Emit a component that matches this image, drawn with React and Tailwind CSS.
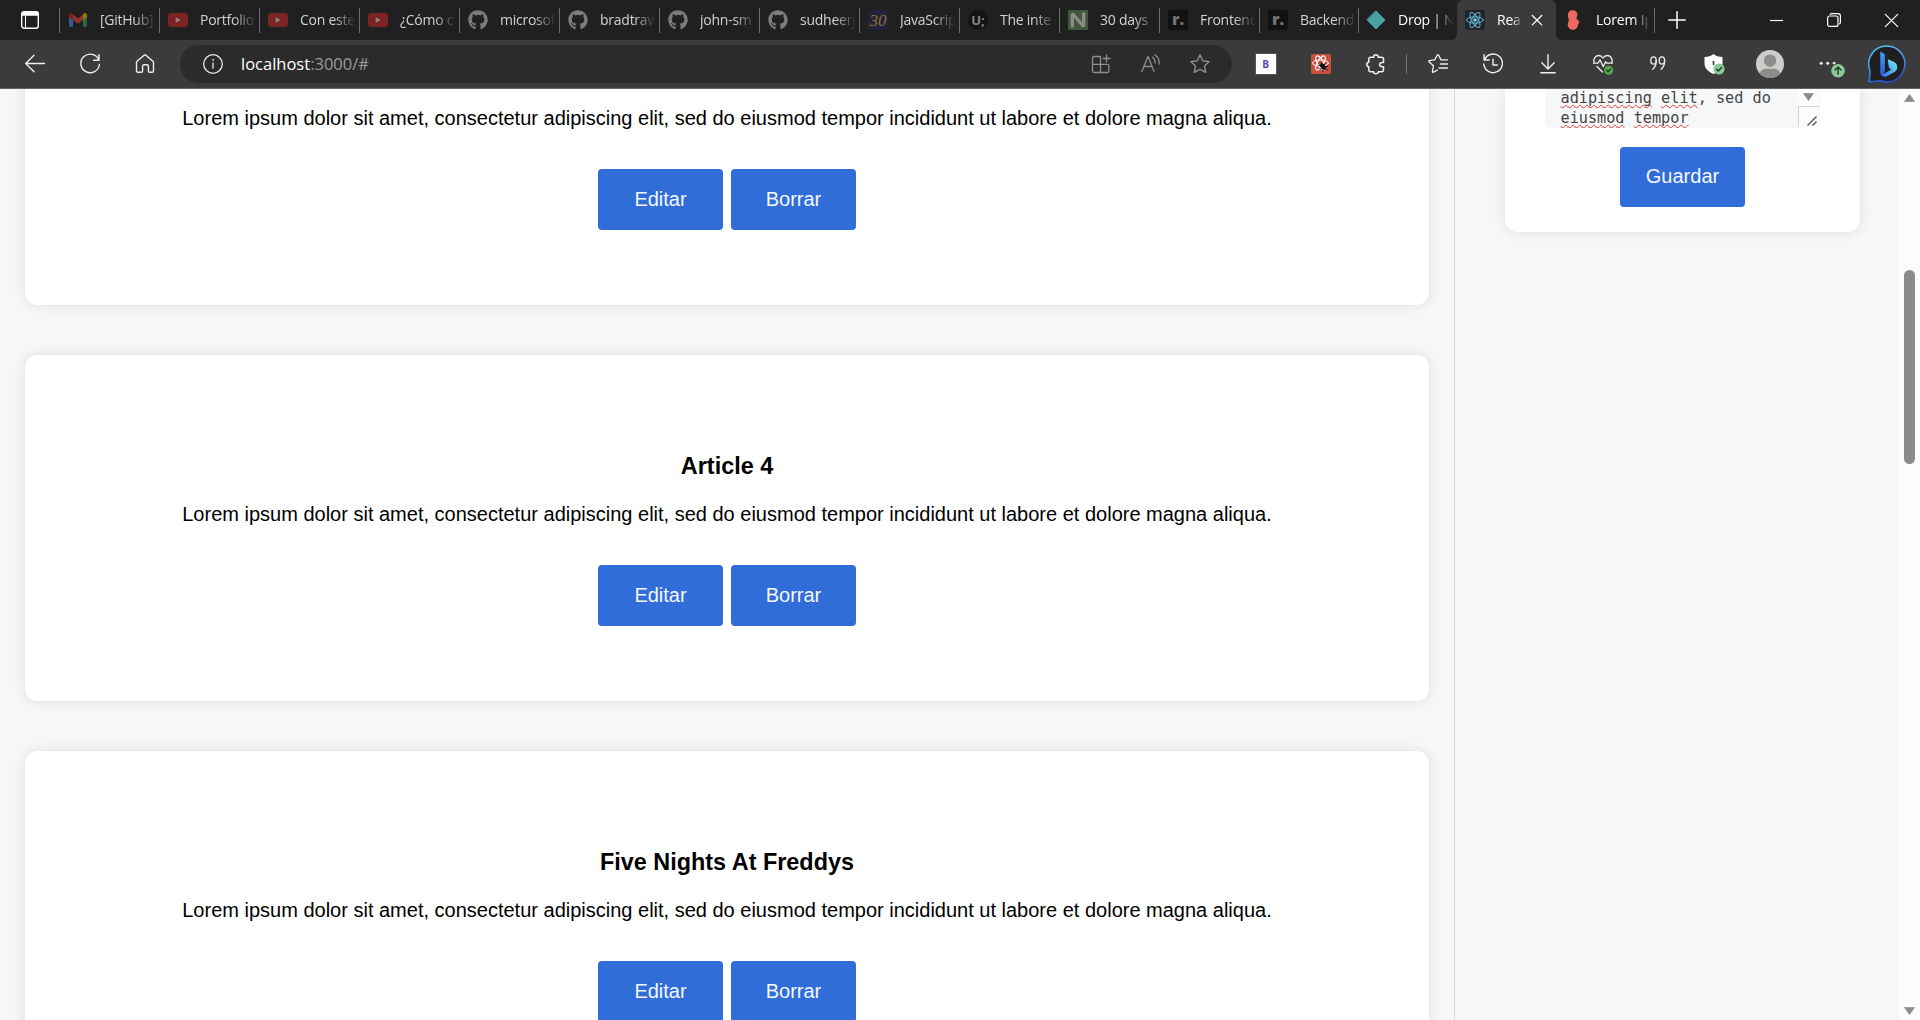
import React from "react";
import { FaGithub } from "react-icons/fa";

const UI = "font-['Open_Sans','Noto_Sans',sans-serif]";
const ARIAL = "font-['Liberation_Sans',Arial,sans-serif]";

const LOREM =
  "Lorem ipsum dolor sit amet, consectetur adipiscing elit, sed do eiusmod tempor incididunt ut labore et dolore magna aliqua.";

function Icon({ size = 20, sw = 1.2, className = "", children }) {
  return (
    <svg
      width={size}
      height={size}
      viewBox={`0 0 ${size} ${size}`}
      fill="none"
      stroke="currentColor"
      strokeWidth={sw}
      strokeLinecap="round"
      strokeLinejoin="round"
      className={`shrink-0 overflow-visible ${className}`}
    >
      {children}
    </svg>
  );
}

/* ---------- favicons ---------- */

const Gmail = () => (
  <Icon className="opacity-55">
    <g stroke="none">
      <path d="M1 5.5V15.6c0 .7.6 1.3 1.3 1.3H5V9.2z" fill="#4285f4" />
      <path d="M15 9.2v7.7h2.700c.7 0 1.300-.6 1.300-1.300V5.500z" fill="#34a853" />
      <path d="M15 5v5l4-3V5c0-1.900-2.100-2.600-3.300-1.600z" fill="#fbbc04" />
      <path d="M5 10V4.600l5 3.800 5-3.800V10l-5 3.800z" fill="#ea4335" />
      <path d="M1 5v2l4 3V4.600L4.300 3.400C3 2.400 1 3.200 1 5z" fill="#c5221f" />
    </g>
  </Icon>
);

const YouTube = () => (
  <Icon>
    <rect x="0" y="3" width="20" height="14" rx="3" fill="#7c2424" stroke="none" />
    <path d="M7.700 7.200l5 2.800-5 2.800z" fill="#8e8583" stroke="none" />
  </Icon>
);

const GitHub = () => <FaGithub className="size-5 shrink-0 text-[#7c7c7c]" />;

const Thirty = () => (
  <span className="flex size-5 shrink-0 items-center justify-center bg-[#24223a] font-['Liberation_Serif',serif] text-[17px] leading-none text-[#8a6f2c] italic">
    30
  </span>
);

const UBadge = () => (
  <span className="flex size-5 shrink-0 items-center justify-center rounded-full bg-[#141414] font-['Open_Sans',sans-serif] text-[13px] leading-none font-bold text-[#868686]">
    U;
  </span>
);

const NBadge = () => (
  <Icon>
    <rect width="20" height="20" fill="#40573a" stroke="none" />
    <path d="M4.300 17.500V3.500L15.700 16.500V2.500" stroke="#8b8b8b" strokeWidth="3.400" strokeLinecap="butt" strokeLinejoin="bevel" />
  </Icon>
);

const RBadge = () => (
  <span className="flex size-5 shrink-0 items-center justify-center rounded-[3px] bg-[#121212] pb-[3px] font-['Open_Sans',sans-serif] text-[16px] leading-none font-extrabold text-[#757575]">
    r.
  </span>
);

const Diamond = () => (
  <Icon>
    <path d="M10 1l9 9-9 9-9-9z" fill="#4aa3a2" stroke="#4aa3a2" strokeWidth="1" />
  </Icon>
);

const ReactLogo = () => (
  <Icon sw={1}>
    <rect width="20" height="20" rx="2" fill="#20232a" stroke="none" />
    <g stroke="#61b8d4">
      <ellipse cx="10" cy="10" rx="8.500" ry="3.200" />
      <ellipse cx="10" cy="10" rx="8.500" ry="3.200" transform="rotate(60 10 10)" />
      <ellipse cx="10" cy="10" rx="8.500" ry="3.200" transform="rotate(120 10 10)" />
    </g>
    <circle cx="10" cy="10" r="1.800" fill="#7fd3ee" stroke="none" />
  </Icon>
);

const LoremLogo = () => (
  <Icon>
    <path
      d="M9.700.2c3 0 4.700 2 4.700 4.600 0 1.700-1 2.500-.9 3.600.1 1.200 2.700 1.600 2.700 3.600 0 1.400-.9 1.600-1.200 3-.5 2.700-2.300 4.900-5 4.900-3 0-5.300-2.300-5.300-5.300 0-2.100 1.300-3 1.200-4.300C5.800 9 4.900 7.500 4.900 5 4.900 2.200 6.700.2 9.700.2z"
      fill="#ee6a61"
      stroke="none"
    />
  </Icon>
);

/* ---------- tab strip ---------- */

const TABS = [
  { icon: Gmail, text: "[GitHub]" },
  { icon: YouTube, text: "Portfolio" },
  { icon: YouTube, text: "Con este" },
  { icon: YouTube, text: "¿Cómo c" },
  { icon: GitHub, text: "microsof" },
  { icon: GitHub, text: "bradtrav" },
  { icon: GitHub, text: "john-sm" },
  { icon: GitHub, text: "sudheerj" },
  { icon: Thirty, text: "JavaScrip" },
  { icon: UBadge, text: "The inte" },
  { icon: NBadge, text: "30 days" },
  { icon: RBadge, text: "Frontend" },
  { icon: RBadge, text: "Backend", width: "w-[99px]" },
  { icon: Diamond, text: "Drop | N", bright: true, width: "w-[98px]", pad: "pl-[7px]", last: true },
];

const FADE = "[mask-image:linear-gradient(to_right,black_62%,transparent_102%)]";

function Tab({ icon: Fav, text, bright, width = "w-[100px]", pad = "pl-2", last }) {
  return (
    <div className={`flex h-full shrink-0 items-center ${width} ${pad}`}>
      <Fav />
      <span
        className={`ml-3 h-5 w-[55px] overflow-hidden text-[14px] leading-5 tracking-[-0.25px] whitespace-nowrap ${FADE} ${
          bright ? "text-white" : "text-[#d2d2d2]"
        }`}
      >
        {text}
      </span>
      {!last && <span className="ml-auto h-[25px] w-px shrink-0 bg-[#6c6c6c]" />}
    </div>
  );
}

function TabStrip() {
  return (
    <div className="flex h-10 items-center overflow-hidden bg-[#202020] text-white">
      <div className="flex w-[60px] shrink-0 items-center pl-5">
        <Icon sw={1.400}>
          <rect x="1.700" y="1.700" width="16.600" height="16.600" rx="2.500" />
          <path d="M2 3.800c0-1.200.8-1.800 2-1.800h12c1.200 0 2 .6 2 1.800V5H2z" fill="currentColor" />
          <path d="M5.500 6v12" strokeWidth="1" />
        </Icon>
        <span className="ml-[19px] h-[25px] w-px bg-[#6c6c6c]" />
      </div>
      {TABS.map((t, i) => (
        <Tab key={i} {...t} />
      ))}
      <div className="relative flex h-10 w-[99px] shrink-0 items-center rounded-t-md bg-[#3b3b3b] pl-2">
        <svg width="6" height="6" viewBox="0 0 6 6" className="absolute bottom-0 -left-1.5">
          <path d="M6 0v6H0a6 6 0 0 0 6-6z" fill="#3b3b3b" />
        </svg>
        <svg width="6" height="6" viewBox="0 0 6 6" className="absolute -right-1.5 bottom-0">
          <path d="M0 0v6h6a6 6 0 0 1-6-6z" fill="#3b3b3b" />
        </svg>
        <ReactLogo />
        <span className={`ml-3 h-5 w-[25px] overflow-hidden text-[14px] leading-5 tracking-[-0.25px] whitespace-nowrap ${FADE}`}>
          Rea
        </span>
        <Icon size={10} sw={1.300} className="ml-[10px]">
          <path d="M.3.500l9.400 9.400M9.700.500L.3 9.900" />
        </Icon>
      </div>
      <div className="flex h-full w-[99px] shrink-0 items-center pl-[7px]">
        <LoremLogo />
        <span className="ml-[13px] h-5 w-[54px] overflow-hidden text-[14px] leading-5 tracking-[-0.2px] whitespace-nowrap [mask-image:linear-gradient(to_right,black_70%,transparent_100%)]">
          Lorem Ip
        </span>
        <span className="ml-auto h-[25px] w-px bg-[#6c6c6c]" />
      </div>
      <Icon size={18} sw={1.500} className="ml-[13px]">
        <path d="M9 .8v16.400M.8 9h16.400" />
      </Icon>
      <div className="ml-auto flex items-center gap-11 pr-[22px]">
        <Icon size={13} sw={1.200}>
          <path d="M0 6.500h13" strokeLinecap="butt" />
        </Icon>
        <Icon size={14} sw={1.200}>
          <rect x=".6" y="3" width="10.400" height="10.400" rx="2" />
          <path d="M3.200 1.300c.4-.5 1-.7 1.600-.7H11c1.400 0 2.400 1 2.400 2.400v6.200c0 .6-.2 1.200-.7 1.600" />
        </Icon>
        <Icon size={13} sw={1.200}>
          <path d="M.3.300l12.400 12.400M12.700.300L.3 12.700" />
        </Icon>
      </div>
    </div>
  );
}

/* ---------- toolbar ---------- */

function Slot({ w = "w-[55px]", children }) {
  return <div className={`flex h-full shrink-0 items-center justify-center ${w}`}>{children}</div>;
}

function AddressBar() {
  return (
    <div className="ml-2 flex h-[38px] w-[1052px] shrink-0 items-center rounded-full bg-[#2b2b2b] pl-[23px] text-[#e8e8e8]">
      <Icon sw={1.300}>
        <circle cx="10" cy="10" r="9.300" />
        <path d="M10 9v5.200" />
        <circle cx="10" cy="5.900" r=".6" fill="currentColor" strokeWidth=".5" />
      </Icon>
      <span className="ml-[18px] text-[16.500px] leading-6 text-white">
        localhost<span className="text-[#9a9a9a]">:3000/#</span>
      </span>
      <div className="ml-auto flex items-center pr-[22px] text-[#8f8f8f]">
        <Icon sw={1.300}>
          <path d="M9.500 2.500H3.200c-1 0-1.700.7-1.700 1.700v12.600c0 1 .7 1.700 1.700 1.700h13c1 0 1.700-.7 1.700-1.700V12c0-1-.7-1.700-1.700-1.700H1.700M9.500 2.500v15.800M15.500 1v7M12 4.500h7" />
        </Icon>
        <Icon sw={1.300} className="ml-[30px]">
          <path d="M.8 17.500L7 2.500l6 15M2.800 12.500h8.400M11.500 3.300c1.800 1.200 2.700 3.300 2.500 5.700M13.700.8c3.200 2 4.800 5.400 4.500 9.200" />
        </Icon>
        <Icon sw={1.400} className="ml-[29px]">
          <path d="M10 .9l2.800 5.900 6.400.8-4.700 4.400 1.200 6.400L10 15.300l-5.700 3.100L5.500 12 .8 7.600l6.400-.8z" />
        </Icon>
      </div>
    </div>
  );
}

function Bing() {
  return (
    <svg width="38" height="38" viewBox="0 0 38 38" fill="none" className="overflow-visible">
      <defs>
        <linearGradient id="ring" x1="10" y1="0" x2="22" y2="38" gradientUnits="userSpaceOnUse">
          <stop offset="0" stopColor="#57c3f3" />
          <stop offset=".55" stopColor="#3f8ce8" />
          <stop offset="1" stopColor="#2548c8" />
        </linearGradient>
        <linearGradient id="stem" x1="13" y1="7" x2="17" y2="31" gradientUnits="userSpaceOnUse">
          <stop offset="0" stopColor="#3ba3f5" />
          <stop offset="1" stopColor="#2b54e0" />
        </linearGradient>
        <linearGradient id="bowl" x1="29" y1="19" x2="14" y2="31" gradientUnits="userSpaceOnUse">
          <stop offset="0" stopColor="#6fe0f5" />
          <stop offset="1" stopColor="#2f6cf0" />
        </linearGradient>
      </defs>
      <path
        d="M19 1a18 18 0 1 1-6.300 34.900c-3.300-.4-7.700 1.600-11.800.5C2 33 2 29 1.700 25A18 18 0 0 1 19 1z"
        fill="#1f1f1f"
        stroke="url(#ring)"
        strokeWidth="1.700"
      />
      <path d="M12.300 7.200c0-.5.400-.6.800-.4l2.900 1.900c.6.400.9.900.9 1.600V25c0 2-.8 4.400-2.300 4.500-1.400.1-2.300-1-2.300-2.400z" fill="url(#stem)" />
      <path d="M19.800 15.300c-.2-.7.300-1.100 1-.8l5.200 2.500c2.200 1.100 3.200 3 3.200 5.200 0 2-.9 3.600-2.600 4.700l-8.300 4.500c-2.600 1.300-5.800-.8-6-4 .4 1.500 1.800 2.400 3.400 1.600l7.900-4.700-1.400-.6c-.8-.4-1.100-.9-1.400-1.800z" fill="url(#bowl)" />
    </svg>
  );
}

function Toolbar() {
  return (
    <div className="flex h-12 items-center bg-[#3b3b3b] pl-[7px] text-[#efefef]">
      <Slot>
        <Icon sw={1.400}>
          <path d="M19.500 9.500H.8M9 1.200L.7 9.500 9 17.800" />
        </Icon>
      </Slot>
      <Slot>
        <Icon sw={1.400}>
          <path d="M18.800 6A9.300 9.300 0 1 0 19.400 10.500M19 .8v5.400h-5.400" />
        </Icon>
      </Slot>
      <Slot>
        <Icon sw={1.400}>
          <path d="M1.500 8.600c0-.6.200-1 .6-1.400l7-6c.5-.4 1.300-.4 1.800 0l7 6c.4.4.6.8.6 1.400v8.300c0 .8-.6 1.400-1.400 1.400h-2.300c-.8 0-1.400-.6-1.400-1.400v-4.700c0-.8-.6-1.400-1.400-1.400H9c-.8 0-1.400.6-1.400 1.400v4.700c0 .8-.6 1.400-1.400 1.400H2.900c-.8 0-1.400-.6-1.400-1.400z" />
        </Icon>
      </Slot>
      <AddressBar />
      <div className="ml-1.5 flex h-full items-center">
        <Slot>
          <span className="flex size-5 items-center justify-center bg-white text-[10px] leading-none font-bold text-[#5148b0] outline outline-[#555]">
            B
          </span>
        </Slot>
        <Slot>
          <Icon sw={1}>
            <rect width="20" height="20" rx="1.500" fill="#cb4f3d" stroke="none" />
            <g stroke="#fff">
              <ellipse cx="9.500" cy="9" rx="8" ry="3" />
              <ellipse cx="9.500" cy="9" rx="8" ry="3" transform="rotate(60 9.500 9)" />
              <ellipse cx="9.500" cy="9" rx="8" ry="3" transform="rotate(120 9.500 9)" />
            </g>
            <ellipse cx="12" cy="12.500" rx="2.300" ry="3.600" transform="rotate(-40 12 12.500)" fill="#111" stroke="none" />
            <path d="M8 11.500l2.500.5M9 15.500l2-2M12 17.500V15M10.500 9l.8 2M14 9.500l-.8 2M16.500 12.500l-2.500.3M16.500 16l-2.500-1.200" stroke="#111" />
          </Icon>
        </Slot>
        <Slot>
          <Icon sw={1.500}>
            <path d="M4.500 3.300h3.100C7.600 1.500 8.600.8 9.900.8s2.300.8 2.300 2.500h3.300c1.200 0 2 .8 2 2v3.200h-1.300c-1.700 0-2.600.9-2.600 2.100s.9 2.100 2.600 2.100h1.300v3.100c0 1.200-.8 2-2 2h-3.300c0 1.400-1 2-2.300 2s-2.300-.6-2.300-2H4.500c-1 0-1.700-.8-1.700-1.800v-3.200C1.500 12.600.8 11.800.8 10.500s.7-2.200 2-2.300V5.100c0-1 .7-1.800 1.700-1.800z" />
          </Icon>
        </Slot>
        <Slot w="w-[7px]">
          <span className="h-5 w-px bg-[#707070]" />
        </Slot>
        <Slot>
          <Icon sw={1.300}>
            <path d="M5.300 18.300c-.6.300-1-.1-.9-.7L5.400 11.800 1 7.700c-.4-.4-.3-.9.300-1l5.400-.8L9.300 1c.3-.5.9-.5 1.200 0l2.500 4.900h6.500M12.500 10h7M11 14h8.500M5.300 18.300l4-2.200" />
          </Icon>
        </Slot>
        <Slot>
          <Icon sw={1.400}>
            <path d="M1.500 5.700A9.300 9.300 0 1 1 .8 10M1 .8v5.200h5.200M10 5.300V11h4.300" />
          </Icon>
        </Slot>
        <Slot>
          <Icon sw={1.400}>
            <path d="M10 .8v14M3.800 8.800l6.200 6.200 6.200-6.200" />
            <path d="M2.800 18.800h14.400" />
          </Icon>
        </Slot>
        <Slot>
          <Icon sw={1.300}>
            <path d="M1 8.500C.2 5.500 2 1.500 5.500 1.500c2 0 3.500 1 4.500 2.500 1-1.500 2.500-2.500 4.500-2.500 3.500 0 5.300 4 4.500 7M.5 9.200H5l2-3.500 3.200 7 2.300-5 1.300 1.500h5.500M4 12.500l5.500 5.500" />
            <circle cx="15.700" cy="16.200" r="4.500" fill="#55a750" stroke="none" />
            <path d="M13.700 16.300l1.400 1.400 2.600-2.700" stroke="#1d3a1c" />
          </Icon>
        </Slot>
        <Slot>
          <Icon sw={1.300}>
            <ellipse cx="5.500" cy="6.500" rx="2.700" ry="3.700" />
            <path d="M8.200 6.500c.3 3.500-1 6.600-3.600 8.700" />
            <ellipse cx="13.900" cy="6.500" rx="2.700" ry="3.700" />
            <path d="M16.600 6.500c.3 3.500-1 6.600-3.600 8.700" />
          </Icon>
        </Slot>
        <Slot w="w-[57px]">
          <Icon sw={1.200}>
            <path d="M9.500 0C11.500 2 15 2.800 18.500 3v6.500c0 5-4.500 8.500-9 10.500C5 18 .5 14.500.5 9.500V3C4 2.800 7.500 2 9.500 0z" fill="#fff" stroke="none" />
            <path d="M9.500 7.500v3" stroke="#3b3b3b" strokeWidth="1.600" />
            <circle cx="15" cy="15" r="5.600" fill="#8cc89a" stroke="none" />
            <path d="M12.500 15.200l1.700 1.700 3.300-3.500" stroke="#1e3b25" strokeWidth="1.400" />
          </Icon>
        </Slot>
        <Slot w="w-14">
          <svg width="28" height="28" viewBox="0 0 28 28">
            <defs>
              <clipPath id="face">
                <circle cx="14" cy="14" r="14" />
              </clipPath>
            </defs>
            <g clipPath="url(#face)">
              <rect width="28" height="28" fill="#cfcdca" />
              <circle cx="14" cy="10.700" r="6.200" fill="#8f8d8b" />
              <path d="M3.500 26c0-5 3-7.300 7-7.300h7c4 0 7 2.300 7 7.300v3h-21z" fill="#8f8d8b" />
            </g>
          </svg>
        </Slot>
        <Slot w="w-14">
          <Icon size={26}>
            <g fill="#efefef" stroke="none">
              <circle cx="8.200" cy="12.300" r="1.500" />
              <circle cx="14.700" cy="12.300" r="1.500" />
              <circle cx="21.200" cy="12.300" r="1.500" />
            </g>
            <circle cx="25" cy="19.700" r="7.600" fill="#3b3b3b" stroke="none" />
            <circle cx="25" cy="19.700" r="6.800" fill="#8cc89a" stroke="none" />
            <path d="M25 23.300v-7M22 19l3-3 3 3" stroke="#1e3b25" strokeWidth="1.400" />
          </Icon>
        </Slot>
        <Slot w="w-[66px]">
          <Bing />
        </Slot>
      </div>
    </div>
  );
}

/* ---------- page ---------- */

function Button({ children, className = "h-[61px]" }) {
  return (
    <button className={`flex w-[125px] items-center justify-center rounded-[4px] bg-[#306dd9] text-[20px] leading-[23px] text-[#f5f7f9] ${className}`}>
      {children}
    </button>
  );
}

function Article({ title }) {
  return (
    <article className="flex h-[346px] shrink-0 flex-col items-center rounded-[12.500px] bg-white pt-[98px] text-black shadow-[0_0_12.500px_rgba(0,0,0,0.1)]">
      <h3 className="text-[23.400px] leading-[27px] font-bold">{title}</h3>
      <p className="mt-[23px] text-[20px] leading-[23px] whitespace-nowrap">{LOREM}</p>
      <div className="mt-[39px] flex gap-2">
        <Button>Editar</Button>
        <Button>Borrar</Button>
      </div>
    </article>
  );
}

function Misspelt({ children }) {
  return (
    <span className="underline decoration-[#e5382f] decoration-wavy decoration-[1.200px] underline-offset-[1px] [text-decoration-skip-ink:none]">
      {children}
    </span>
  );
}

function Triangle({ up }) {
  return (
    <svg width="11" height="8" viewBox="0 0 11 8" className="shrink-0">
      <path d={up ? "M5.500 .3L10.800 7.800H.2z" : "M.2 .3h10.600L5.500 7.800z"} fill="#8b8b8b" stroke="#8b8b8b" strokeWidth=".4" strokeLinejoin="round" />
    </svg>
  );
}

function SideForm() {
  return (
    <aside className="flex w-[445px] shrink-0 border-l border-[#d9dadc] pl-[50px]">
      <div className="flex h-[143px] w-[355px] flex-col items-center rounded-b-[12.500px] bg-white shadow-[0_0_12.500px_rgba(0,0,0,0.1)]">
        <div className="flex h-[39px] w-[275px] shrink-0 overflow-hidden rounded-b-md bg-[#f5f7f9]">
          <div className="w-[253px] pl-[15.500px] font-['DejaVu_Sans_Mono',monospace] text-[15.200px] leading-[19.500px] whitespace-nowrap text-[#444]">
            <div>
              <Misspelt>adipiscing</Misspelt> <Misspelt>elit</Misspelt>, sed do
            </div>
            <div>
              <Misspelt>eiusmod</Misspelt> <Misspelt>tempor</Misspelt>
            </div>
          </div>
          <div className="flex w-[21px] flex-col items-center bg-[#fcfcfc]">
            <div className="flex h-[17px] items-center pb-px">
              <Triangle />
            </div>
            <div className="flex h-[21px] w-full items-end justify-end border-t border-l border-[#d4d4d4] pr-0.5 pb-px">
              <svg width="10" height="10" viewBox="0 0 10 10" fill="none" stroke="#555" strokeWidth="1.400">
                <path d="M.5 9.500l9-9M5.500 9.500l4-4" />
              </svg>
            </div>
          </div>
        </div>
        <div className="mt-[19px]">
          <Button className="h-[60px] pb-px">Guardar</Button>
        </div>
      </div>
    </aside>
  );
}

export default function App() {
  return (
    <div className={`flex h-[1020px] w-[1920px] flex-col overflow-hidden bg-[#f5f7f9] ${UI}`}>
      <TabStrip />
      <Toolbar />
      <div className="h-px shrink-0 bg-[#646464]" />
      <div className={`flex h-[931px] overflow-hidden ${ARIAL}`}>
        <main className="-mt-[130px] flex w-[1454px] shrink-0 flex-col gap-[50px] px-[25px]">
          <Article title="Article 3" />
          <Article title="Article 4" />
          <Article title="Five Nights At Freddys" />
        </main>
        <SideForm />
        <div className="flex w-[21px] shrink-0 flex-col items-center bg-[#fcfcfc] pt-[5px] pb-[5px]">
          <Triangle up />
          <div className="mt-[168px] h-[194px] w-[11px] rounded-full bg-[#8b8b8b]" />
          <div className="mt-auto flex">
            <Triangle />
          </div>
        </div>
      </div>
    </div>
  );
}
